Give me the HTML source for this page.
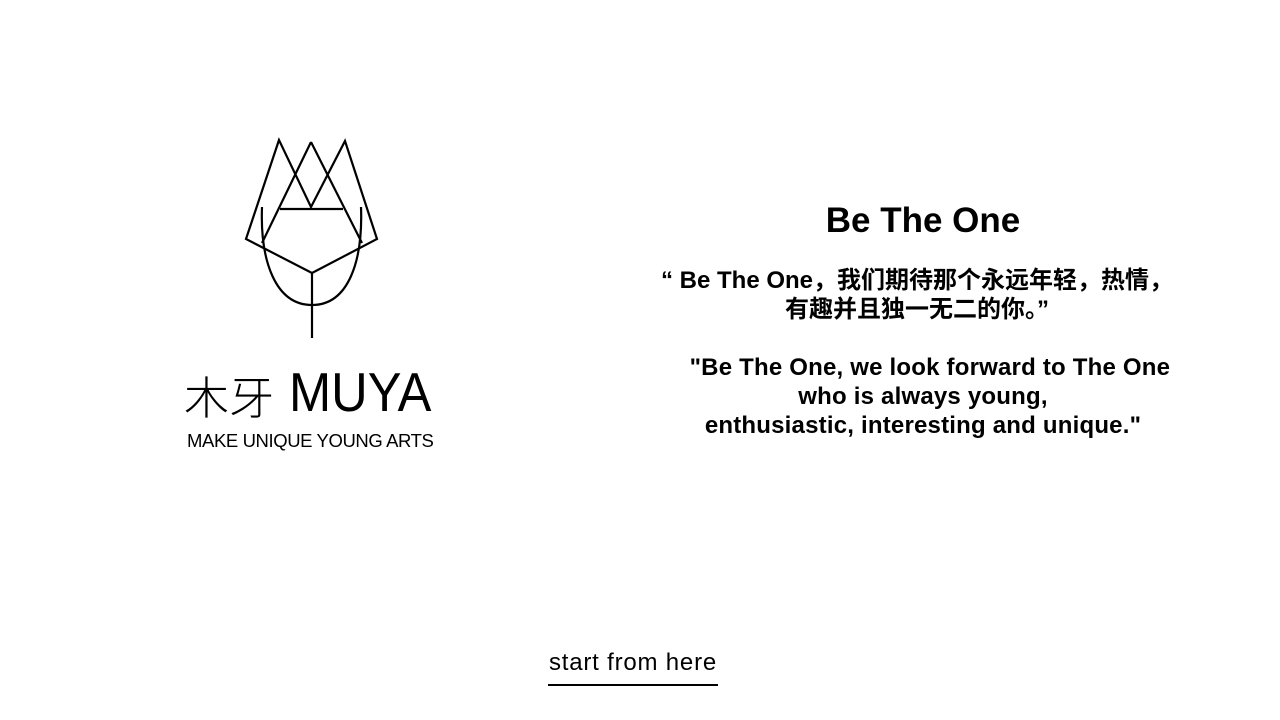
<!DOCTYPE html>
<html><head><meta charset="utf-8"><style>
html,body{margin:0;padding:0;background:#fff;width:1280px;height:720px;overflow:hidden;position:relative;font-family:"Liberation Sans","Noto Sans CJK SC",sans-serif;color:#000}
.a{position:absolute;white-space:nowrap}
</style></head><body>
<svg class="a" style="left:0;top:0" width="1280" height="720" viewBox="0 0 1280 720" fill="none" stroke="#000" stroke-width="2.2" stroke-linejoin="miter">
<path d="M279 140 L246 239 L312 273 L377 239 L345 141 L311 207 L279 140 Z"/>
<path d="M311 142 L262 243 M311 142 L362 243"/>
<path d="M280 209 L343 209"/>
<path d="M262 207 C260 260 275 305 312 305 C349 305 363 260 361 207"/>
<path d="M312 273 L312 338"/>
</svg>
<div class="a" style="left:184px;top:365px;font-size:45px;font-family:'Noto Sans CJK SC',sans-serif;font-weight:300;line-height:60px">木牙</div>
<div class="a" style="left:289px;top:360px;font-size:55px;line-height:64px;transform:scaleX(0.92);transform-origin:0 0">MUYA</div>
<div class="a" style="left:187px;top:430px;font-size:18.5px;line-height:22px;letter-spacing:-0.4px">MAKE UNIQUE YOUNG ARTS</div>
<div class="a" style="left:623px;width:600px;top:200px;text-align:center;font-size:35px;font-weight:bold;line-height:42px">Be The One</div>
<div class="a" style="left:617px;width:600px;top:266px;text-align:center;font-size:24px;font-weight:bold;line-height:29px">“ Be The One，我们期待那个永远年轻，热情，<br>有趣并且独一无二的你。”</div>
<div class="a" style="left:623px;width:600px;top:353px;text-align:center;font-size:24px;font-weight:bold;line-height:29px;letter-spacing:0.2px">&nbsp;&nbsp;"Be The One, we look forward to The One<br>who is always young,<br>enthusiastic, interesting and unique."</div>
<div class="a" style="left:533px;width:200px;top:649px;text-align:center;font-size:24px;line-height:28px;letter-spacing:0.8px">start from here</div>
<div class="a" style="left:548px;top:684px;width:170px;height:2px;background:#000"></div>
</body></html>
